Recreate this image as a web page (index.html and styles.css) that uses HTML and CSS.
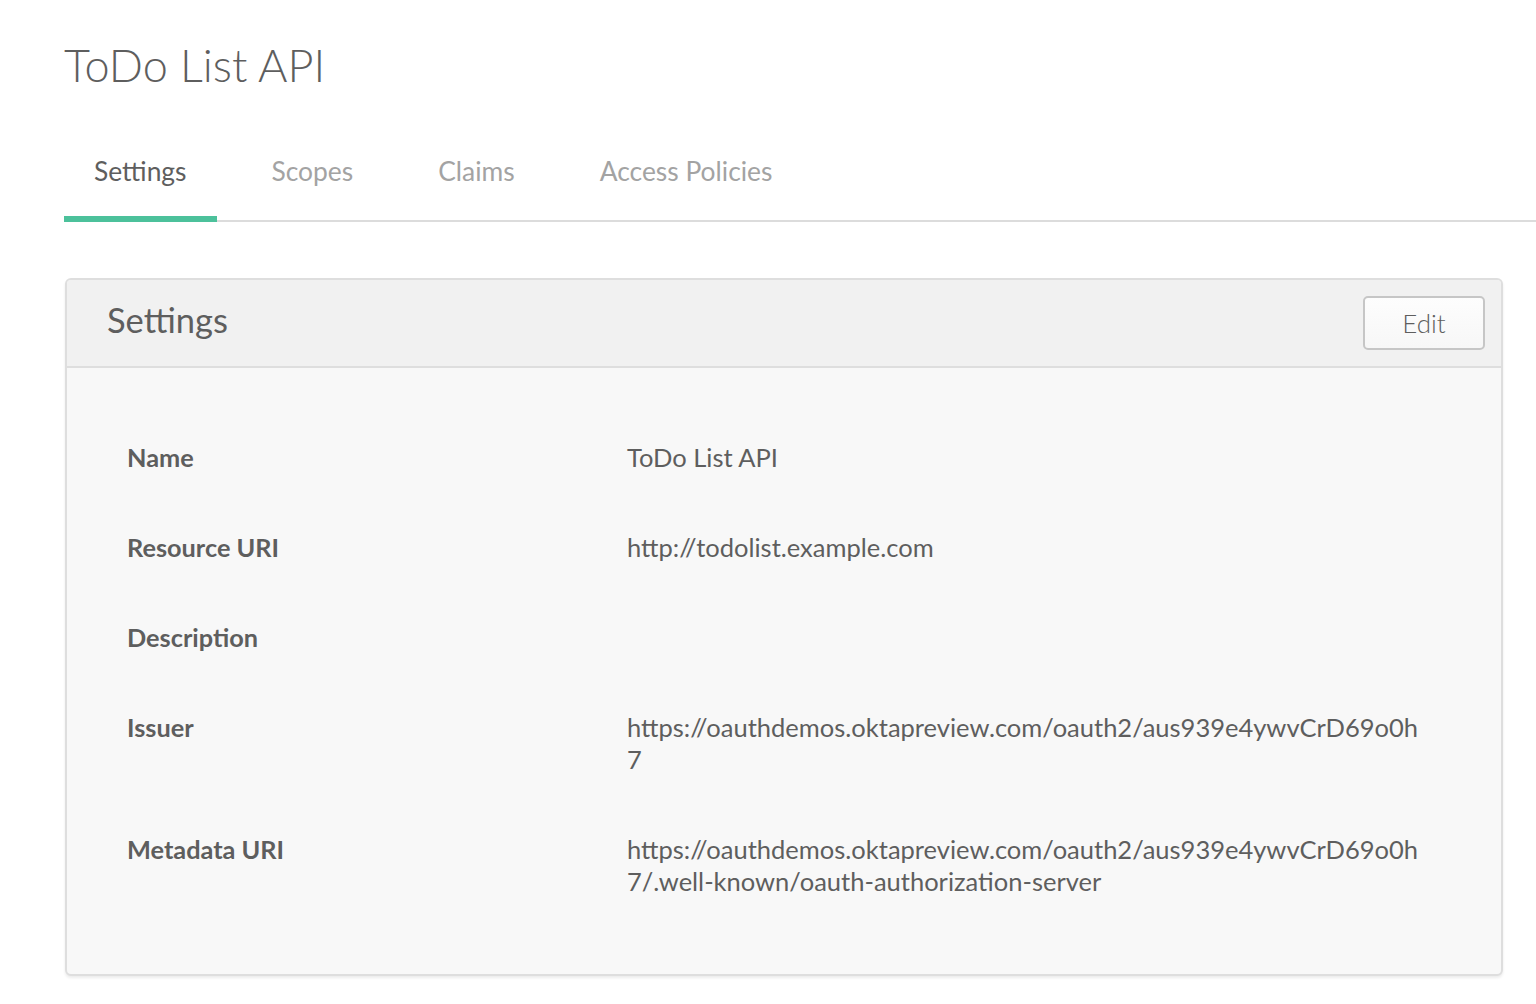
FILE: index.html
```html
<!DOCTYPE html>
<html lang="en">
<head>
<meta charset="utf-8">
<title>ToDo List API</title>
<link rel="stylesheet" href="styles.css">
</head>
<body>
<main class="page">
  <h1 class="page-title">ToDo List API</h1>
  <nav class="tabs">
    <a class="tab tab-active">Settings</a>
    <a class="tab">Scopes</a>
    <a class="tab">Claims</a>
    <a class="tab">Access Policies</a>
  </nav>
  <section class="panel">
    <header class="panel-header">
      <h2 class="panel-title">Settings</h2>
      <button class="btn">Edit</button>
    </header>
    <div class="panel-body">
      <dl class="fields">
        <dt class="field-label">Name</dt>
        <dd class="field-value">ToDo List API</dd>
        <dt class="field-label">Resource URI</dt>
        <dd class="field-value">http://todolist.example.com</dd>
        <dt class="field-label">Description</dt>
        <dd class="field-value"></dd>
        <dt class="field-label">Issuer</dt>
        <dd class="field-value">https://oauthdemos.oktapreview.com/oauth2/aus939e4ywvCrD69o0h7</dd>
        <dt class="field-label">Metadata URI</dt>
        <dd class="field-value">https://oauthdemos.oktapreview.com/oauth2/aus939e4ywvCrD69o0h7/.well-known/oauth-authorization-server</dd>
      </dl>
    </div>
  </section>
</main>
</body>
</html>
```

FILE: styles.css
```css
* { box-sizing: border-box; }
html, body { margin: 0; padding: 0; background: #fff; }
body {
  font-family: Lato, "Open Sans", sans-serif;
  color: #5e5e5e;
}
.page {
  padding: 0 0 20px 64px;
}
.page-title {
  margin: 0;
  padding-top: 35px;
  font-size: 45px;
  line-height: 60px;
  font-weight: 300;
  color: #5e5e5e;
}
.tabs {
  display: flex;
  margin-top: 59px;
  border-bottom: 2px solid #dcdcdc;
}
.tab {
  display: block;
  padding: 0 30px 28px;
  margin-right: 25px;
  font-size: 26.4px;
  line-height: 34px;
  color: #a3a3a3;
  margin-bottom: -2px;
  border-bottom: 6px solid transparent;
}
.tab-active {
  color: #5e5e5e;
  border-bottom-color: #4cc19b;
}
.panel {
  margin: 56px 33px 0 1px;
  border: 2px solid #dedede;
  border-radius: 6px;
  background: #f8f8f8;
  box-shadow: 0 2px 3px rgba(0,0,0,0.08);
  overflow: hidden;
}
.panel-header {
  display: flex;
  align-items: center;
  justify-content: space-between;
  height: 88px;
  padding: 0 16px 0 40px;
  background: #f1f1f1;
  border-bottom: 2px solid #dedede;
}
.panel-title {
  margin: 0 0 6px;
  font-size: 34.5px;
  line-height: 40px;
  font-weight: 400;
  color: #5e5e5e;
}
.btn {
  width: 122px;
  height: 54px;
  border: 2px solid #c6c6c6;
  border-radius: 5px;
  background: linear-gradient(#fdfdfd, #f7f7f7);
  font-family: inherit;
  font-size: 26px;
  font-weight: 300;
  color: #5e5e5e;
  padding: 0;
}
.panel-body {
  padding: 44px 77px 48px 60px;
}
.fields {
  display: grid;
  grid-template-columns: 500px 1fr;
  margin: 0;
}
.field-label, .field-value {
  margin: 0;
  padding: 29px 0;
  font-size: 25.5px;
  line-height: 32px;
  color: #5e5e5e;
}
.field-label {
  font-size: 25.3px;
  font-weight: 700;
}
.field-value {
  word-break: break-all;
}
```
